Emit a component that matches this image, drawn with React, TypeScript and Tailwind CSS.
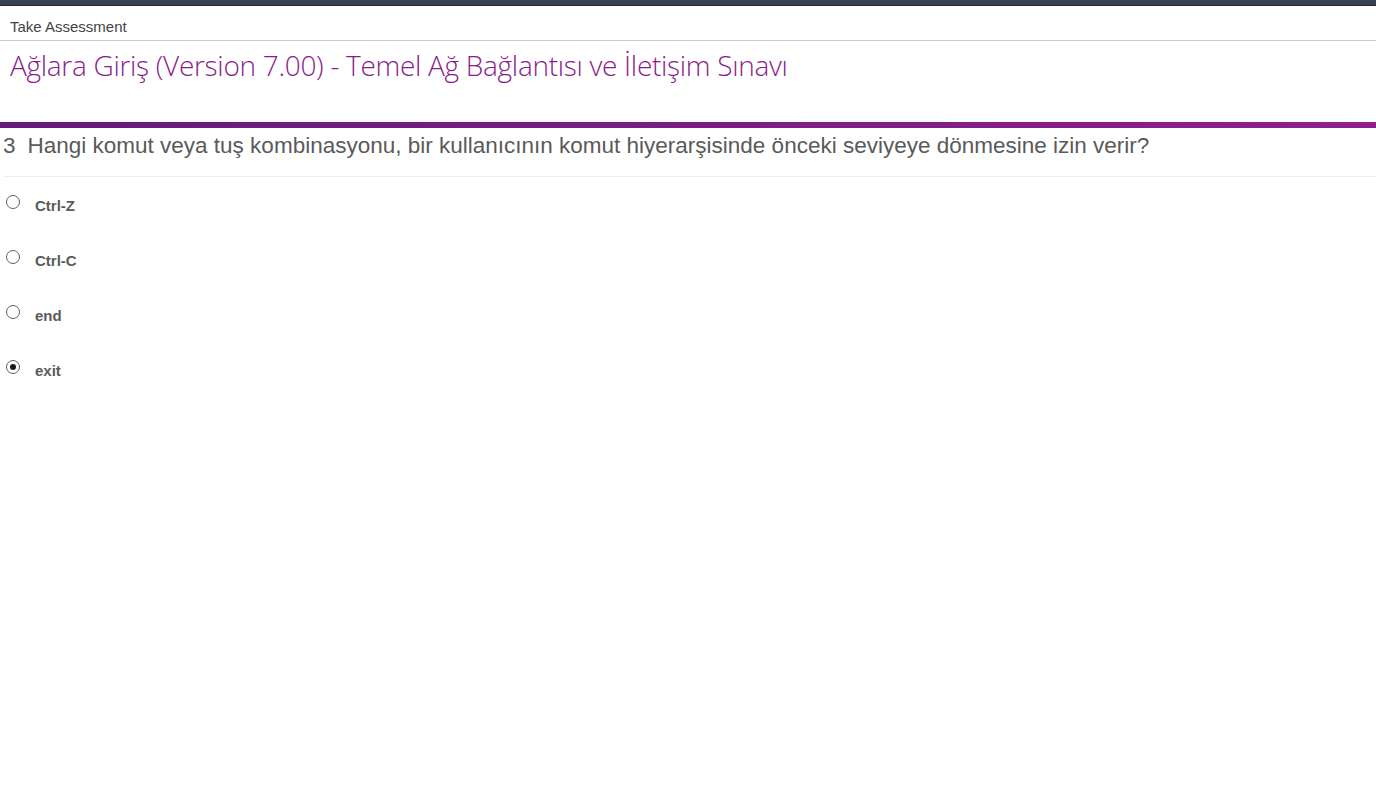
import React from 'react';

interface Option {
  label: string;
  checked?: boolean;
}

const options: Option[] = [
  { label: 'Ctrl-Z' },
  { label: 'Ctrl-C' },
  { label: 'end' },
  { label: 'exit', checked: true },
];

const Radio: React.FC<{ checked?: boolean }> = ({ checked }) => (
  <span className="flex h-[14px] w-[14px] items-center justify-center rounded-full border-[1.5px] border-[#606060] bg-white">
    {checked && <span className="h-[6px] w-[6px] rounded-full bg-[#1a1a1a]" />}
  </span>
);

export default function App() {
  return (
    <div className="min-h-screen bg-white font-['Liberation_Sans',Arial,sans-serif]">
      <div className="h-[6px] border-b border-[#1f262d] bg-[#36434f]" />

      <div className="flex h-[35px] items-end border-b border-[#cccccc] px-[10px] pb-[3px]">
        <span className="text-[15px] leading-[20px] text-[#444]">Take Assessment</span>
      </div>

      <div className="h-[81px] px-[10px] pt-[5px]">
        <h1 className="font-['Open_Sans',sans-serif] text-[28px] leading-[38px] font-light tracking-[-0.3px] text-[#8a1d8c]">
          Ağlara Giriş (Version 7.00) - Temel Ağ Bağlantısı ve İletişim Sınavı
        </h1>
      </div>

      <div className="h-[6px] bg-gradient-to-r from-[#651a7b] to-[#901e8e]" />

      <div className="pl-[3px]">
        <div className="flex h-[49px] items-start border-b border-[#eeeeee] pt-[3px] text-[22.5px] leading-[30px] text-[#5a5a5a]">
          <span className="mr-[12px]">3</span>
          <span>Hangi komut veya tuş kombinasyonu, bir kullanıcının komut hiyerarşisinde önceki seviyeye dönmesine izin verir?</span>
        </div>

        <div className="flex flex-col pt-[18px]">
          {options.map((o) => (
            <label key={o.label} className="flex h-[55px] items-start">
              <span className="ml-[3px] w-[29px]">
                <Radio checked={o.checked} />
              </span>
              <span className="mt-[2px] text-[15px] leading-[18px] font-bold text-[#5a5a5a]">{o.label}</span>
            </label>
          ))}
        </div>
      </div>
    </div>
  );
}
